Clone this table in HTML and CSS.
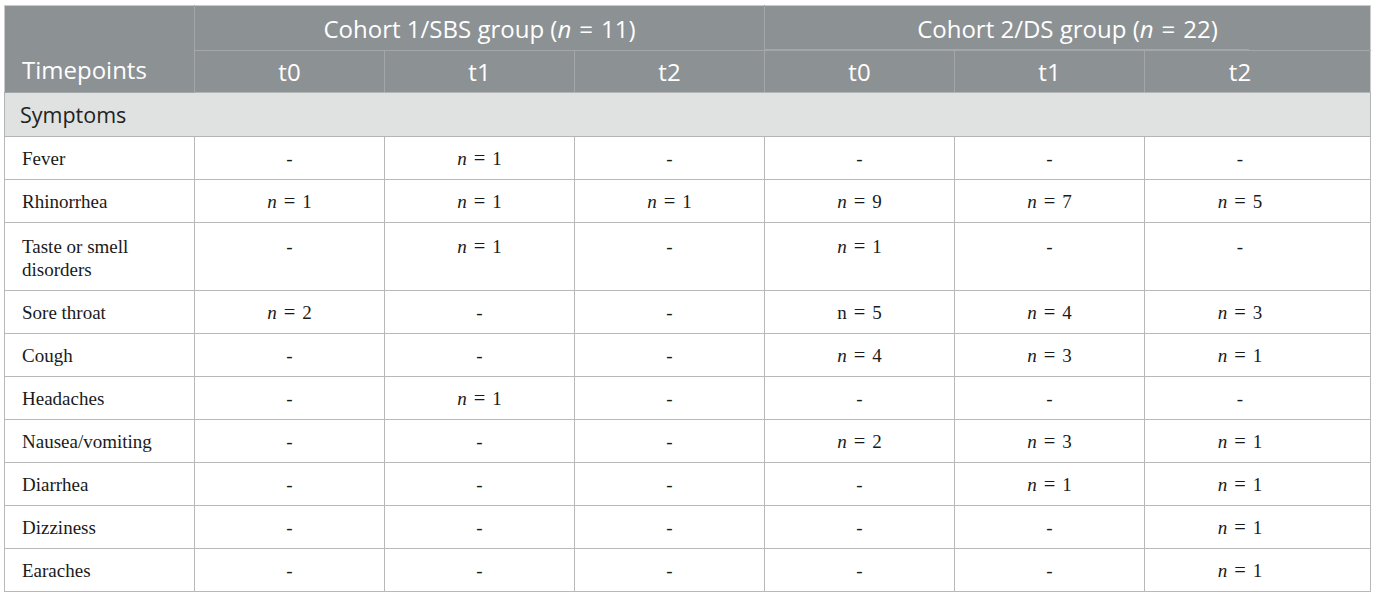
FILE: index.html
```html
<!DOCTYPE html>
<html>
<head>
<meta charset="utf-8">
<link rel="stylesheet" href="styles.css">
</head>
<body>
<div class="wrap">
<table class="tbl">
  <colgroup>
    <col class="c-first"><col class="c"><col class="c"><col class="c"><col class="c"><col class="c"><col class="c-last">
  </colgroup>
  <thead>
    <tr class="h1">
      <th class="tp" rowspan="2">Timepoints</th>
      <th colspan="3">Cohort 1/SBS group (<i>n</i><span class="eq">=</span>11)</th>
      <th colspan="3" class="c2">Cohort 2/DS group (<i>n</i><span class="eq">=</span>22)</th>
    </tr>
    <tr class="h2">
      <th>t0</th><th>t1</th><th>t2</th><th>t0</th><th>t1</th><th class="last">t2</th>
    </tr>
  </thead>
  <tbody>
    <tr class="sec"><td colspan="7">Symptoms</td></tr>
    <tr><td>Fever</td><td>-</td><td><i>n</i><span class="eq">=</span>1</td><td>-</td><td>-</td><td>-</td><td>-</td></tr>
    <tr><td>Rhinorrhea</td><td><i>n</i><span class="eq">=</span>1</td><td><i>n</i><span class="eq">=</span>1</td><td><i>n</i><span class="eq">=</span>1</td><td><i>n</i><span class="eq">=</span>9</td><td><i>n</i><span class="eq">=</span>7</td><td><i>n</i><span class="eq">=</span>5</td></tr>
    <tr class="tall"><td>Taste or smell<br>disorders</td><td>-</td><td><i>n</i><span class="eq">=</span>1</td><td>-</td><td><i>n</i><span class="eq">=</span>1</td><td>-</td><td>-</td></tr>
    <tr><td>Sore throat</td><td><i>n</i><span class="eq">=</span>2</td><td>-</td><td>-</td><td>n<span class="eq">=</span>5</td><td><i>n</i><span class="eq">=</span>4</td><td><i>n</i><span class="eq">=</span>3</td></tr>
    <tr><td>Cough</td><td>-</td><td>-</td><td>-</td><td><i>n</i><span class="eq">=</span>4</td><td><i>n</i><span class="eq">=</span>3</td><td><i>n</i><span class="eq">=</span>1</td></tr>
    <tr><td>Headaches</td><td>-</td><td><i>n</i><span class="eq">=</span>1</td><td>-</td><td>-</td><td>-</td><td>-</td></tr>
    <tr><td>Nausea/vomiting</td><td>-</td><td>-</td><td>-</td><td><i>n</i><span class="eq">=</span>2</td><td><i>n</i><span class="eq">=</span>3</td><td><i>n</i><span class="eq">=</span>1</td></tr>
    <tr><td>Diarrhea</td><td>-</td><td>-</td><td>-</td><td>-</td><td><i>n</i><span class="eq">=</span>1</td><td><i>n</i><span class="eq">=</span>1</td></tr>
    <tr><td>Dizziness</td><td>-</td><td>-</td><td>-</td><td>-</td><td>-</td><td><i>n</i><span class="eq">=</span>1</td></tr>
    <tr><td>Earaches</td><td>-</td><td>-</td><td>-</td><td>-</td><td>-</td><td><i>n</i><span class="eq">=</span>1</td></tr>
  </tbody>
</table>
</div>
</body>
</html>
```
FILE: styles.css
```css
html, body { margin: 0; padding: 0; background: #fff; }
.wrap { padding: 5px 0 0 4px; }
.tbl {
  border-collapse: collapse;
  table-layout: fixed;
  width: 1366px;
  border: 1px solid #c9cccb;
}
.c-first { width: 190px; }
.c { width: 190px; }
.c-last { width: 226px; }
.eq { margin: 0 7px; font-size: 1.08em; }
.tbl th {
  background: #8c9194;
  color: #ffffff;
  font-family: "Open Sans", "Lato", sans-serif;
  font-weight: 400;
  font-size: 24px;
  text-align: center;
  vertical-align: middle;
  padding: 0;
  border: 1px solid #a3a7a9;
}
.tbl th i { font-style: italic; }
.tbl th .eq { margin: 0 8px; font-size: 1em; }
.h1 th { height: 44px; border-top: none; }
.h1 th.tp {
  text-align: left;
  vertical-align: bottom;
  padding: 0 0 6px 17px;
  border-left: none;
}
.h1 th.c2 {
  border-bottom: none;
  border-right: none;
  background-image: linear-gradient(#a3a7a9, #a3a7a9);
  background-repeat: no-repeat;
  background-size: 484px 1px;
  background-position: left bottom;
}
.h2 th { height: 41px; border-bottom: 1px solid #b3b6b6; }
.h2 th.last { border-right: none; padding-right: 35px; }
.tbl td {
  font-family: "Liberation Serif", "Times New Roman", serif;
  font-size: 19px;
  line-height: 23px;
  color: #1a1a1a;
  text-align: center;
  vertical-align: middle;
  height: 42px;
  padding: 0;
  border: 1px solid #b8b8b8;
}
.tbl td:first-child {
  text-align: left;
  padding-left: 17px;
}
.tbl td:last-child { padding-right: 35px; }
.tbl td i { font-style: italic; }
.tbl tr.tall td {
  height: 55px;
  vertical-align: top;
  padding-top: 12px;
}
.tbl tr.sec td {
  background: #e0e2e1;
  font-family: "Open Sans", "Lato", sans-serif;
  font-size: 21.5px;
  color: #222;
  height: 43px;
  padding-left: 15px;
  padding-right: 0;
  text-align: left;
  border-color: #b3b6b6;
}
```
